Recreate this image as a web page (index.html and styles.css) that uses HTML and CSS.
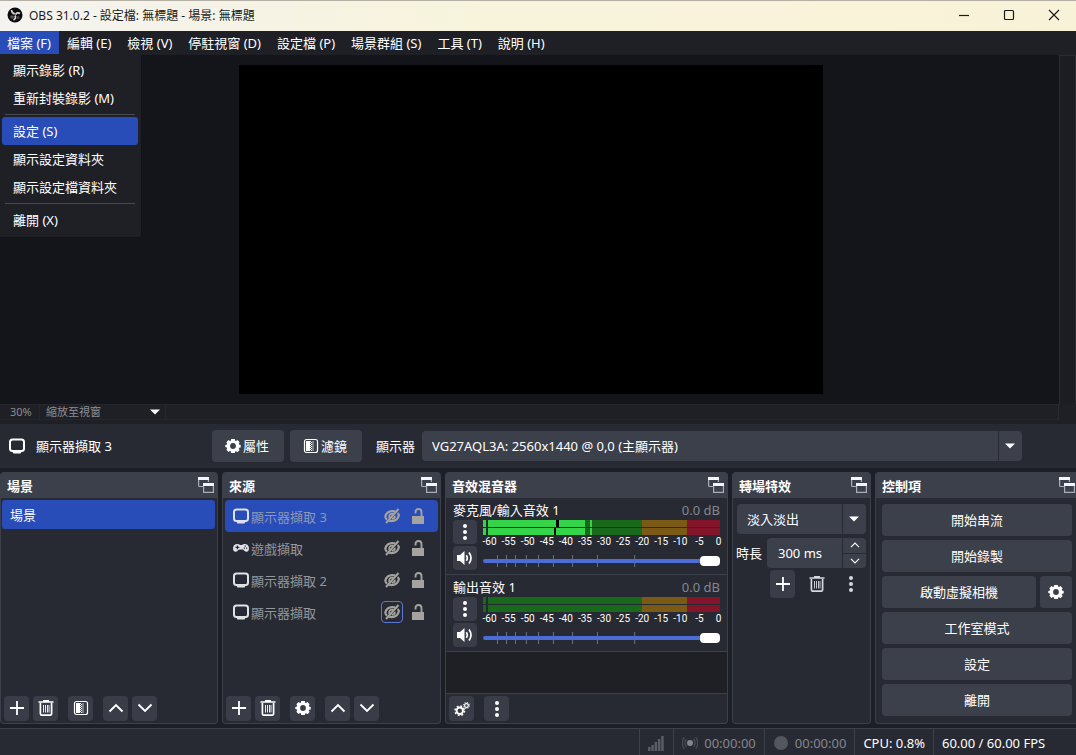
FILE: index.html
```html
<!DOCTYPE html>
<html lang="zh-Hant">
<head>
<meta charset="utf-8">
<title>OBS 31.0.2</title>
<link rel="stylesheet" href="styles.css">
</head>
<body>
<svg class="sprite" aria-hidden="true">
  <symbol id="i-popout" viewBox="0 0 16 16"><path d="M6 9.500H1.500Q.6 9.500.6 8.600V1.500H10.400V5" fill="none" stroke="#a9adb6" stroke-width="1.200"/><path d="M0 0h11v3H0z" fill="#f4f5f8"/><path d="M5.600 7.500h9.800v7.900H5.600z" fill="#3c404d" stroke="#a9adb6" stroke-width="1.200"/><path d="M5 6h11v3H5z" fill="#f4f5f8"/></symbol>
  <symbol id="i-monitor" viewBox="0 0 16 16"><rect x="1" y="1.500" width="14" height="11.500" rx="2.500" fill="none" stroke="currentColor" stroke-width="2"/><path d="M3 13h10l-1.500 2.500h-7z" fill="currentColor"/></symbol>
  <symbol id="i-gear" viewBox="0 0 16 16"><path fill="currentColor" fill-rule="evenodd" d="M6.200 1h3.600l.4 1.700.8.300 1.500-.9 2.100 2.100-.8 1.500.3.800 1.600.4v2.500l-1.600.4-.3.800.8 1.500-2.100 2.100-1.500-.9-.8.300L9.800 15H6.200l-.4-1.700-.8-.3-1.500.9-2.100-2.100.8-1.500-.3-.8-1.600-.4V6.900l1.600-.4.300-.8-.8-1.500 2.100-2.100 1.500.9.800-.3zM8 5.100a2.900 2.900 0 1 0 0 5.800A2.900 2.900 0 0 0 8 5.100z"/></symbol>
  <symbol id="i-filter" viewBox="0 0 16 16"><rect x="1.500" y="1.500" width="13" height="13" rx="2" fill="none" stroke="currentColor" stroke-width="1.200"/><path d="M3 3h4v10H3z" fill="currentColor"/><path d="M7 3h1v1H7zm0 2h1v1H7zm0 2h1v1H7zm0 2h1v1H7zm0 2h1v1H7zm1-7h1v1H8zm0 2h1v1H8zm0 2h1v1H8zm0 2h1v1H8zm0 2h1v1H8z" fill="currentColor"/><path d="M9 3h2v10H9z" fill="currentColor" opacity=".35"/></symbol>
  <symbol id="i-plus" viewBox="0 0 16 16"><path d="M8 1v14M1 8h14" stroke="currentColor" stroke-width="1.800" fill="none"/></symbol>
  <symbol id="i-trash" viewBox="0 0 16 16"><path d="M.5 2h15M5 .8h6" stroke="currentColor" stroke-width="1.600"/><path d="M2.400 3v10.500Q2.400 15.200 4 15.200h8q1.600 0 1.600-1.700V3" fill="none" stroke="currentColor" stroke-width="1.700"/><path d="M5.500 5v7.500M7.500 5v7.500M9.500 5v7.500M11 5v7.500" stroke="currentColor" stroke-width=".9"/></symbol>
  <symbol id="i-up" viewBox="0 0 16 16"><path d="M1.500 11.500 8 5l6.500 6.500" fill="none" stroke="currentColor" stroke-width="1.900"/></symbol>
  <symbol id="i-down" viewBox="0 0 16 16"><path d="M1.500 4.500 8 11l6.500-6.500" fill="none" stroke="currentColor" stroke-width="1.900"/></symbol>
  <symbol id="i-dots" viewBox="0 0 16 16"><circle cx="8" cy="2" r="2" fill="currentColor"/><circle cx="8" cy="8" r="2" fill="currentColor"/><circle cx="8" cy="14" r="2" fill="currentColor"/></symbol>
  <symbol id="i-sound" viewBox="0 0 16 16"><path d="M0 5h3l4.500-4v14L3 11H0z" fill="currentColor"/><path d="M9.300 5.200q2 2.800 0 5.600M12 2.500q4 5.500 0 11" fill="none" stroke="currentColor" stroke-width="1.700"/></symbol>
  <symbol id="i-eye" viewBox="0 0 16 16"><path d="M1.200 9C2 5 5 3.100 8.500 3.100q1.500 0 2.700.5M15 6.500c-.5 4-3.500 6.600-7.500 6.600q-1.300 0-2.300-.4" fill="none" stroke="currentColor" stroke-width="2.200"/><path d="M1.200 8.500q.3 2 1.900 3.200M15 7q-.4-1.200-1.500-2.100" fill="none" stroke="currentColor" stroke-width="2"/><path d="M5.200 9.800Q4.500 5.500 9 5.700M11 7.800q0 3-3.200 3" fill="none" stroke="currentColor" stroke-width="1.700"/><path d="M2 15 14.500 1" stroke="currentColor" stroke-width="2"/></symbol>
  <symbol id="i-lock" viewBox="0 0 14 16"><path d="M1 8h12v8H1z" fill="currentColor"/><path d="M10.500 8.500V4.200Q10.500 1 7.500 1T4.500 4.200V5.500" fill="none" stroke="currentColor" stroke-width="1.900"/></symbol>
  <symbol id="i-pad" viewBox="0 0 16 16"><path fill="currentColor" fill-rule="evenodd" d="M4.500 4Q6 4 7 5h2q1-1 2.500-1C14.500 4 16 6 16 8.500c0 2-1 3.300-2.500 3.300-2 0-2.500-2.300-4-2.300h-3c-1.500 0-2 2.300-4 2.300C1 11.800 0 10.500 0 8.500 0 6 1.500 4 4.500 4zM3.800 5.500v1.300H2.500v1.200h1.300v1.300H5V8h1.300V6.800H5V5.500zm7.900 0v1.200h1.200V5.500zm-1 2v1.200h1.200V7.500zm2.300 0v1.200h1.200V7.500z"/></symbol>
  <symbol id="i-caret" viewBox="0 0 10 6"><path d="M0 .5h10L5 5.500z" fill="#fff"/></symbol>
  <symbol id="i-ticks" viewBox="0 0 100 12" preserveAspectRatio="none"><path vector-effect="non-scaling-stroke" d="M6.100 0v12M9.900 0v12M13.700 0v12M18.300 0v12M23.400 0v12M29.700 0v12M37.800 0v12M48.300 0v12M64 0v12" stroke="#6e727d" stroke-width="1" fill="none"/></symbol>
</svg>

<div class="window">
  <header class="titlebar">
    <svg class="logo" viewBox="0 0 16 16"><circle cx="8" cy="8" r="7.500" fill="#0c0c0c"/><g fill="none" stroke="#d8d8d8" stroke-width="1.700"><path d="M4.500 3q.3 3.500 3.300 3.800"/><path d="M13 6.500Q10 4.800 8.500 7.500"/><path d="M6.500 13Q9.500 11.500 8 8.500"/></g><circle cx="5" cy="10" r="1.800" fill="#555"/><circle cx="11" cy="10.500" r="1.600" fill="#444"/></svg>
    <h1 class="title">OBS 31.0.2 - 設定檔: 無標題 - 場景: 無標題</h1>
    <div class="winbtns">
      <button aria-label="最小化"><svg viewBox="0 0 12 12"><path d="M1 6.500h10"/></svg></button>
      <button aria-label="最大化"><svg viewBox="0 0 12 12"><rect x="1.500" y="1.500" width="9" height="9" rx="1"/></svg></button>
      <button aria-label="關閉"><svg viewBox="0 0 12 12"><path d="M1 1l10 10M11 1 1 11"/></svg></button>
    </div>
  </header>

  <nav class="menubar">
    <div class="menuroot">
      <button class="open">檔案 (F)</button>
      <div class="dropdown">
        <button>顯示錄影 (R)</button>
        <button>重新封裝錄影 (M)</button>
        <hr>
        <button class="on">設定 (S)</button>
        <button>顯示設定資料夾</button>
        <button>顯示設定檔資料夾</button>
        <hr>
        <button>離開 (X)</button>
      </div>
    </div>
    <button>編輯 (E)</button>
    <button>檢視 (V)</button>
    <button>停駐視窗 (D)</button>
    <button>設定檔 (P)</button>
    <button>場景群組 (S)</button>
    <button>工具 (T)</button>
    <button>說明 (H)</button>
  </nav>

  <main class="preview">
    <div class="stage"><div class="canvas"></div></div>
    <div class="vscroll"></div>
  </main>
  <div class="zoombar">
    <span class="pct">30%</span>
    <button class="fit">縮放至視窗<svg class="caret"><use href="#i-caret"/></svg></button>
    <span class="hscroll"></span>
  </div>

  <section class="sourcebar">
    <svg class="ic src"><use href="#i-monitor"/></svg>
    <span class="srcname">顯示器擷取 3</span>
    <button class="btn"><svg class="ic"><use href="#i-gear"/></svg>屬性</button>
    <button class="btn"><svg class="ic"><use href="#i-filter"/></svg>濾鏡</button>
    <label class="displbl" for="display">顯示器</label>
    <div class="combo wide">
      <select id="display"><option>VG27AQL3A: 2560x1440 @ 0,0 (主顯示器)</option></select>
      <svg class="caret"><use href="#i-caret"/></svg>
    </div>
  </section>

  <div class="docks">
    <section class="dock">
      <header><h2>場景</h2><button aria-label="浮動"><svg class="ic"><use href="#i-popout"/></svg></button></header>
      <div class="list scenes"><button class="scene">場景</button></div>
      <footer>
        <button class="tool" aria-label="新增"><svg class="ic"><use href="#i-plus"/></svg></button>
        <button class="tool" aria-label="移除"><svg class="ic"><use href="#i-trash"/></svg></button>
        <button class="tool gap" aria-label="濾鏡"><svg class="ic"><use href="#i-filter"/></svg></button>
        <button class="tool gap" aria-label="上移"><svg class="ic"><use href="#i-up"/></svg></button>
        <button class="tool" aria-label="下移"><svg class="ic"><use href="#i-down"/></svg></button>
      </footer>
    </section>

    <section class="dock">
      <header><h2>來源</h2><button aria-label="浮動"><svg class="ic"><use href="#i-popout"/></svg></button></header>
      <div class="list">
        <div class="source on"><svg class="ic"><use href="#i-monitor"/></svg><span>顯示器擷取 3</span><button aria-label="顯示"><svg class="ic"><use href="#i-eye"/></svg></button><button aria-label="鎖定"><svg class="ic"><use href="#i-lock"/></svg></button></div>
        <div class="source"><svg class="ic"><use href="#i-pad"/></svg><span>遊戲擷取</span><button aria-label="顯示"><svg class="ic"><use href="#i-eye"/></svg></button><button aria-label="鎖定"><svg class="ic"><use href="#i-lock"/></svg></button></div>
        <div class="source"><svg class="ic"><use href="#i-monitor"/></svg><span>顯示器擷取 2</span><button aria-label="顯示"><svg class="ic"><use href="#i-eye"/></svg></button><button aria-label="鎖定"><svg class="ic"><use href="#i-lock"/></svg></button></div>
        <div class="source"><svg class="ic"><use href="#i-monitor"/></svg><span>顯示器擷取</span><button class="focus" aria-label="顯示"><svg class="ic"><use href="#i-eye"/></svg></button><button aria-label="鎖定"><svg class="ic"><use href="#i-lock"/></svg></button></div>
      </div>
      <footer>
        <button class="tool" aria-label="新增"><svg class="ic"><use href="#i-plus"/></svg></button>
        <button class="tool" aria-label="移除"><svg class="ic"><use href="#i-trash"/></svg></button>
        <button class="tool gap" aria-label="屬性"><svg class="ic"><use href="#i-gear"/></svg></button>
        <button class="tool gap" aria-label="上移"><svg class="ic"><use href="#i-up"/></svg></button>
        <button class="tool" aria-label="下移"><svg class="ic"><use href="#i-down"/></svg></button>
      </footer>
    </section>

    <section class="dock">
      <header><h2>音效混音器</h2><button aria-label="浮動"><svg class="ic"><use href="#i-popout"/></svg></button></header>
      <div class="channel">
        <div class="chhead"><label for="vol1">麥克風/輸入音效 1</label><span>0.0 dB</span></div>
        <div class="chbody">
          <div class="chbtns">
            <button class="tool" aria-label="選項"><svg class="ic"><use href="#i-dots"/></svg></button>
            <button class="tool" aria-label="靜音"><svg class="ic"><use href="#i-sound"/></svg></button>
          </div>
          <div class="chmain">
            <div class="meter live"></div><div class="meter live low"></div>
            <div class="scale"><span>-60</span><span>-55</span><span>-50</span><span>-45</span><span>-40</span><span>-35</span><span>-30</span><span>-25</span><span>-20</span><span>-15</span><span>-10</span><span>-5</span><span>0</span></div>
            <div class="slider"><svg><use href="#i-ticks"/></svg><input id="vol1" type="range" min="0" max="100" value="100"></div>
          </div>
        </div>
      </div>
      <div class="channel">
        <div class="chhead"><label for="vol2">輸出音效 1</label><span>0.0 dB</span></div>
        <div class="chbody">
          <div class="chbtns">
            <button class="tool" aria-label="選項"><svg class="ic"><use href="#i-dots"/></svg></button>
            <button class="tool" aria-label="靜音"><svg class="ic"><use href="#i-sound"/></svg></button>
          </div>
          <div class="chmain">
            <div class="meter"></div><div class="meter"></div>
            <div class="scale"><span>-60</span><span>-55</span><span>-50</span><span>-45</span><span>-40</span><span>-35</span><span>-30</span><span>-25</span><span>-20</span><span>-15</span><span>-10</span><span>-5</span><span>0</span></div>
            <div class="slider"><svg><use href="#i-ticks"/></svg><input id="vol2" type="range" min="0" max="100" value="100"></div>
          </div>
        </div>
      </div>
      <div class="void"></div>
      <footer class="ruled">
        <button class="tool" aria-label="進階音效屬性"><svg class="ic" viewBox="0 0 18 18"><g fill="none" stroke="#fff"><circle cx="6.500" cy="11" r="3.600" stroke-width="2.200"/><circle cx="6.500" cy="11" r="5.300" stroke-width="1.800" stroke-dasharray="2.080 2.080"/><circle cx="14" cy="5" r="2.100" stroke-width="1.300"/><circle cx="14" cy="5" r="3.200" stroke-width="1.200" stroke-dasharray="1.256 1.256"/></g></svg></button>
        <button class="tool gap" aria-label="選項"><svg class="ic"><use href="#i-dots"/></svg></button>
      </footer>
    </section>

    <section class="dock">
      <header><h2>轉場特效</h2><button aria-label="浮動"><svg class="ic"><use href="#i-popout"/></svg></button></header>
      <div class="trans">
        <div class="combo">
          <select aria-label="轉場特效"><option>淡入淡出</option></select>
          <svg class="caret"><use href="#i-caret"/></svg>
        </div>
        <div class="duration">
          <label for="dur">時長</label>
          <div class="spin">
            <input id="dur" type="text" value="300 ms">
            <div class="spinbtns">
              <button aria-label="增加"><svg><use href="#i-up"/></svg></button>
              <button aria-label="減少"><svg><use href="#i-down"/></svg></button>
            </div>
          </div>
        </div>
        <div class="transbtns">
          <button class="tool" aria-label="新增"><svg class="ic"><use href="#i-plus"/></svg></button>
          <button class="tool flat" aria-label="移除"><svg class="ic"><use href="#i-trash"/></svg></button>
          <button class="tool flat" aria-label="選項"><svg class="ic"><use href="#i-dots"/></svg></button>
        </div>
      </div>
    </section>

    <section class="dock last">
      <header><h2>控制項</h2><button aria-label="浮動"><svg class="ic"><use href="#i-popout"/></svg></button></header>
      <div class="controls">
        <button class="btn">開始串流</button>
        <button class="btn">開始錄製</button>
        <div class="pair"><button class="btn">啟動虛擬相機</button><button class="btn" aria-label="虛擬相機設定"><svg class="ic"><use href="#i-gear"/></svg></button></div>
        <button class="btn">工作室模式</button>
        <button class="btn">設定</button>
        <button class="btn">離開</button>
      </div>
    </section>
  </div>

  <footer class="status">
    <span class="cell net"><svg class="ic" viewBox="0 0 16 16"><path d="M0 12h2.500v4H0zM3.300 10h2.500v6H3.300zM6.600 7h2.500v9H6.600zM9.900 4h2.500v12H9.900zM13.200 1h2.500v15h-2.500z" fill="#5a5d66"/></svg></span>
    <span class="cell dim"><svg class="ic" viewBox="0 0 16 16"><circle cx="8" cy="8" r="3" fill="#84868d"/><g fill="none" stroke="#484b54" stroke-width="1.300"><path d="M4.500 4q-3.200 4 0 8M11.500 4q3.200 4 0 8M2.300 2q-4 6 0 12M13.700 2q4 6 0 12"/></g></svg>00:00:00</span>
    <span class="cell dim"><svg class="ic" viewBox="0 0 16 16"><circle cx="8" cy="8" r="7" fill="#54565d"/></svg>00:00:00</span>
    <span class="cell">CPU: 0.8%</span>
    <span class="cell fps">60.00 / 60.00 FPS</span>
  </footer>
</div>
</body>
</html>
```

FILE: styles.css
```css
* { box-sizing: border-box; }
body {
  margin: 0;
  background: #1d1f26;
  color: #fff;
  font: 13px/16px "Noto Sans", "Noto Sans CJK TC", sans-serif;
}
button, input, select { font: inherit; color: inherit; border: 0; margin: 0; padding: 0; background: none; }
h1, h2 { margin: 0; font-size: 13px; }
.sprite { display: none; }
.ic { display: block; flex: none; width: 16px; height: 16px; }
.caret { width: 10px; height: 6px; }

.window { display: flex; flex-direction: column; min-height: 100vh; }

.titlebar {
  display: flex; align-items: center; height: 31px; padding-left: 7px;
  border-top: 1px solid #b5b0a6;
  background: linear-gradient(90deg, #f4f3f0, #f8f4dc 45%, #f8f2d8);
  color: #1a1a1a;
}
.logo { width: 16px; height: 16px; margin-bottom: 2px; }
.title { flex: 1; margin-left: 6px; font-size: 12px; font-weight: 400; }
.winbtns { display: flex; padding-bottom: 2px; }
.winbtns button { display: grid; place-items: center; width: 45px; height: 28px; }
.winbtns svg { width: 12px; height: 12px; fill: none; stroke: #1a1a1a; stroke-width: 1.2; }
.winbtns button:first-child { width: 44px; }

.menubar { display: flex; height: 24px; background: #1f2026; }
.menubar > button, .menuroot > button { height: 23px; padding: 0 8px; white-space: nowrap; }
.menuroot { position: relative; }
.menuroot > .open { padding-left: 7px; background: #284cb8; }
.dropdown {
  position: absolute; top: 24px; left: 0; z-index: 2;
  display: flex; flex-direction: column; width: 142px; padding: 1px 3px 3px 2px;
  background: #1f2026; border-right: 1px solid #111217; border-bottom: 1px solid #111217;
}
.dropdown button { height: 28px; padding-left: 11px; text-align: left; border-radius: 3px; }
.dropdown .on { background: #284cb8; }
.dropdown hr { width: calc(100% - 6px); height: 1px; margin: 2px 3px; border: 0; background: #47494f; }

.preview { flex: 1; display: flex; background: #14151a; }
.stage { flex: 1; display: flex; justify-content: center; align-items: center; padding: 10px 0 10px 3px; }
.canvas { height: 100%; aspect-ratio: 16 / 9; background: #000; }
.vscroll { width: 17px; background: #1c1d22; border: 1px solid #2a2b31; border-bottom: 0; }

.zoombar {
  display: flex; height: 20px; color: #8b8d93;
  font-size: 11px; background: #1f2025;
}
.zoombar > * { height: 16px; line-height: 14px; border-top: 1px solid #26272c; border-bottom: 1px solid #26272c; }
.pct { width: 40px; padding-left: 10px; border-right: 1px solid #26272c; }
.zoombar .fit { display: flex; align-items: center; justify-content: space-between; width: 126px; padding: 0 5px 0 6px; border-right: 1px solid #26272c; }
.hscroll { flex: 1; margin-right: 17px; border-right: 1px solid #2a2b31; }

.sourcebar { display: flex; align-items: center; height: 44px; padding: 0 8px; margin-bottom: 4px; background: #272a33; }
.src { margin-left: 1px; }
.srcname { width: 176px; margin-left: 11px; }
.btn {
  display: flex; align-items: center; justify-content: center; gap: 2px;
  height: 32px; background: #3c404b; border-radius: 4px;
}
.sourcebar .btn { width: 72px; margin-right: 6px; padding-right: 2px; }
.displbl { margin: 0 7px 0 8px; }
.combo { position: relative; height: 30px; background: #3c404b; border-radius: 4px; }
.combo::after { content: ""; position: absolute; top: 0; bottom: 0; right: 23px; width: 1px; background: #282b34; }
.combo select { appearance: none; display: block; width: 100%; height: 30px; padding: 0 26px 0 10px; }
.combo .caret { position: absolute; right: 7px; top: 12px; }
.wide { flex: 1; margin-right: 46px; }

.docks { display: grid; grid-template-columns: 218fr 219fr 283fr 139fr 201fr; gap: 4px; }
.dock {
  display: flex; flex-direction: column; min-width: 0;
  background: #272a33; border: 1px solid #3c404b; border-top: 0; border-radius: 4px; overflow: hidden;
}
.dock > header { display: flex; align-items: center; justify-content: space-between; height: 26px; padding: 0 3px 0 6px; background: #3c404b; }
.dock h2 { padding-top: 1px; font-weight: 700; }
.last { border-right: 0; border-radius: 4px 0 0 4px; }
.last > header { padding-right: 1px; }
.list { flex: 1; padding: 2px; }
.scenes { padding: 2px 2px 2px 1px; }
.scene { display: block; width: 100%; height: 29px; padding: 0 8px; text-align: left; background: #284cb8; border-radius: 3px; }
.source { display: flex; align-items: center; height: 32px; padding: 0 9px 0 8px; color: #dfe1e8; border-radius: 4px; }
.source span { flex: 1; padding: 1px 0 0 2px; color: #95979c; }
.source button { display: grid; place-items: center; width: 22px; height: 22px; margin-left: 4px; color: #a5a39f; border-radius: 4px; }
.source .focus { border: 1px solid #5b78d6; }
.source.on { background: #284cb8; }
.source.on span { color: #8d97b4; }
.dock > footer { display: flex; align-items: center; gap: 4px; height: 30px; padding: 0 3px; }
.dock > .ruled { border-top: 1px solid #3c404b; }
.tool { display: grid; place-items: center; flex: none; width: 25px; height: 25px; background: #3a3d48; border-radius: 4px; }
.gap { margin-left: 6px; }
.flat { background: none; color: #d5d7dd; }

.channel { height: 77px; padding: 4px 7px 0; border-bottom: 1px solid #3c404b; }
.chhead { display: flex; justify-content: space-between; }
.chhead span { color: #84878f; }
.chbody { display: flex; gap: 6px; margin-top: 2px; }
.chbtns { display: flex; flex-direction: column; gap: 2px; }
.chbtns .tool { width: 24px; height: 24px; }
.chmain { flex: 1; min-width: 0; }
.meter {
  height: 7px; margin-bottom: 1px;
  background: linear-gradient(90deg, #19691d 3px, #272a33 3px 5px, #19691d 5px 67%, #7a5a14 67% 86%, #84142a 86%);
}
.live { background: linear-gradient(90deg, #35d54a 3px, #272a33 3px 5px, #35d54a 5px 31%, #000 31% 32%, #35d54a 32% 43%, #19691d 43% 45%, #35d54a 45% 46%, #19691d 46% 67%, #7a5a14 67% 86%, #84142a 86%); }
.live.low { background: linear-gradient(90deg, #35d54a 3px, #272a33 3px 5px, #35d54a 5px 30%, #000 30% 31%, #35d54a 31% 43%, #19691d 43% 45%, #35d54a 45% 46%, #19691d 46% 67%, #7a5a14 67% 86%, #84142a 86%); }
.scale { display: flex; margin: 0 -8px 0 -3px; font: 10px/12px Roboto, sans-serif; }
.scale span { flex: 1 0 0; text-align: center; }
.slider { display: grid; align-items: center; height: 12px; margin-top: 7px; }
.slider > * { grid-area: 1 / 1; width: 100%; height: 12px; }
.slider input { appearance: none; position: relative; }
.slider input::-webkit-slider-runnable-track { height: 4px; background: #4c6cd8; border-radius: 2px; }
.slider input::-webkit-slider-thumb { appearance: none; width: 20px; height: 10px; margin-top: -3px; background: #fff; border-radius: 4px; }
.void { flex: 1; background: #1f2025; }

.trans { display: flex; flex-direction: column; gap: 4px; padding: 6px 4px; }
.duration { display: flex; align-items: center; justify-content: space-between; }
.duration label { margin-left: -1px; }
.spin { display: flex; width: 99px; height: 30px; background: #3c404b; border-radius: 4px; }
.spin input { flex: 1; min-width: 0; padding: 0 0 0 11px; }
.spinbtns { display: flex; flex-direction: column; width: 24px; border-left: 1px solid #282b34; }
.spinbtns button { flex: 1; display: grid; place-items: center; }
.spinbtns button + button { border-top: 1px solid #282b34; }
.spinbtns svg { width: 10px; height: 10px; }
.transbtns { display: flex; justify-content: flex-end; gap: 9px; margin: -2px 3px 0 0; }
.transbtns .tool { height: 28px; }

.controls { display: flex; flex-direction: column; gap: 4px; padding: 6px 4px 7px 6px; }
.pair { display: grid; grid-template-columns: 1fr 32px; gap: 4px; }

.status { display: flex; justify-content: flex-end; height: 27px; margin-top: 4px; background: #272a33; border-top: 1px solid #3c404b; }
.cell { display: flex; align-items: center; gap: 6px; padding: 2px 8px 0; border-left: 1px solid #3c404b; }
.net { width: 34px; }
.dim { color: #84868d; }
.fps { width: 143px; }
```
